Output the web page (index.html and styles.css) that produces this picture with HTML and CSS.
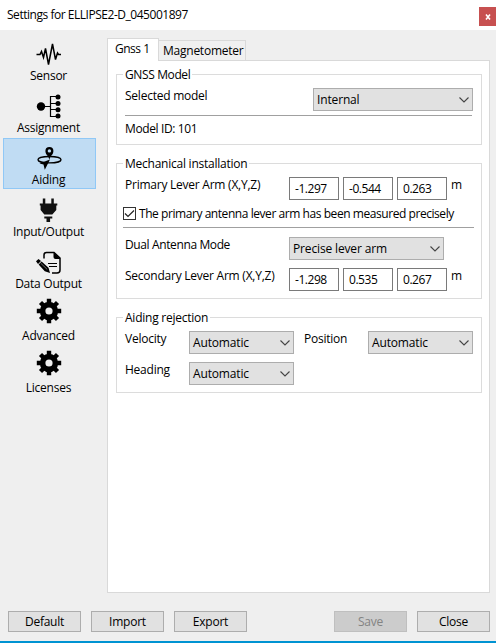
FILE: index.html
```html
<!DOCTYPE html>
<html lang="en">
<head>
<meta charset="utf-8">
<title>Settings for ELLIPSE2-D_045001897</title>
<link rel="stylesheet" href="styles.css">
</head>
<body>
<div class="window">
  <header class="titlebar"><span class="title">Settings for ELLIPSE2-D_045001897</span><span class="close-x"><svg width="6" height="6" viewBox="0 0 6 6"><path d="M1 .5 5 5.5M5 .5 1 5.5" stroke="#fff" stroke-width="1.6"/></svg></span></header>
  <div class="content">
    <nav class="sidebar">
      <div class="item"><svg class="icon" viewBox="0 0 26 26"><path d="M.5 12.500H4L5.500 9.500 7.500 15.500 9.500 6.500 12.500 22.500 16.500 2 19.500 17.500 21.500 11 22.500 12.500H25" fill="none" stroke="#000" stroke-width="1.5"/></svg><span>Sensor</span></div>
      <div class="item"><svg class="icon" viewBox="0 0 26 26"><circle cx="5" cy="12.500" r="4.200"/><path d="M5 12.500H14.500M22 2.500H14.500V22.500H22M14.500 9.500H22M14.500 15.500H22" fill="none" stroke="#000" stroke-width="1.200"/><circle cx="22" cy="3" r="2.500"/><circle cx="22" cy="9.400" r="2.500"/><circle cx="22" cy="15.700" r="2.500"/><circle cx="22" cy="22" r="2.500"/></svg><span>Assignment</span></div>
      <div class="item active"><svg class="icon" viewBox="0 0 26 26"><ellipse cx="13.500" cy="13.700" rx="11.500" ry="3.200" fill="none" stroke="#000" stroke-width="1.400"/><path d="M13.400 13.700C12.700 10 9.400 8.700 9.400 5a4 4 0 0 1 8 0C17.400 8.700 14.100 10 13.400 13.700Z"/><circle cx="13.400" cy="4.900" r="1.700" fill="#c0dcf3"/><path d="M14 13.500 3.500 17.500 7.500 18.500 8.800 23.800Z"/></svg><span>Aiding</span></div>
      <div class="item"><svg class="icon" viewBox="0 0 26 26"><path d="M6 .5H8.500V5.500H14.500V.5H17V5.500H20.500V7.500H19.500V12L15.500 16.500H7.500L3.800 12V7.500H3V5.500H6ZM7.500 18.500H15.500V20.500H13.300V24H9.700V20.500H7.500Z" fill="#111" transform="translate(.8 0)"/></svg><span>Input/Output</span></div>
      <div class="item"><svg class="icon" viewBox="0 0 26 26"><path d="M8 8.500V5q0-2.500 2.500-2.500H18L24 8v12q0 3-3 3h-5" fill="none" stroke="#000" stroke-width="1.500"/><path d="M17.500 2 24.500 9h-5q-2 0-2-2Z"/><path d="M12 13.500h9M13 16.500h8" stroke="#000" stroke-width="1.100"/><path d="M0 11.200 2.500 9 5 11 2 14ZM5.600 11.400 12.500 17.700 14 23 8.800 21.200 2.600 14.500Z"/><path d="m4.700 13.200 6.500 6.200" stroke="#bbb" stroke-width=".6"/></svg><span>Data Output</span></div>
      <div class="item gear"><svg class="icon" viewBox="0 0 26 26"><use href="#cog"/></svg><span>Advanced</span></div>
      <div class="item gear"><svg class="icon" viewBox="0 0 26 26"><use href="#cog"/></svg><span>Licenses</span></div>
    </nav>
    <main class="main">
      <div class="tabs"><span class="tab selected">Gnss 1</span><span class="tab second">Magnetometer</span></div>
      <div class="panel">
        <section class="group model">
          <h2 class="tight">GNSS Model</h2>
          <div class="row top"><span class="label">Selected model</span><span class="select wide">Internal<svg class="chev" viewBox="0 0 10 6"><path d="M.5.5 5 5 9.500.5"/></svg></span></div>
          <div class="rule"></div>
          <div class="model-id tight">Model ID: 101</div>
        </section>
        <section class="group mechanical">
          <h2>Mechanical installation</h2>
          <div class="row"><span class="label arm">Primary Lever Arm (X,Y,Z)</span><span class="fields"><span>-1.297</span><span>-0.544</span><span>0.263</span></span><span class="unit">m</span></div>
          <div class="check-row"><span class="check"><svg width="11" height="11" viewBox="0 0 11 11"><path d="M1 5.500 4 8.500 10 2.500" fill="none" stroke="#222" stroke-width="1.200"/></svg></span><span class="check-label">The primary antenna lever arm has been measured precisely</span></div>
          <div class="rule full"></div>
          <div class="row dual"><span class="label arm tight">Dual Antenna Mode</span><span class="select medium">Precise lever arm<svg class="chev" viewBox="0 0 10 6"><path d="M.5.5 5 5 9.500.5"/></svg></span></div>
          <div class="row second-arm"><span class="label arm">Secondary Lever Arm (X,Y,Z)</span><span class="fields"><span>-1.298</span><span>0.535</span><span>0.267</span></span><span class="unit">m</span></div>
        </section>
        <section class="group rejection">
          <h2>Aiding rejection</h2>
          <div class="reject-grid">
            <span class="label">Velocity</span><span class="select">Automatic<svg class="chev" viewBox="0 0 10 6"><path d="M.5.5 5 5 9.500.5"/></svg></span><span class="label position">Position</span><span class="select">Automatic<svg class="chev" viewBox="0 0 10 6"><path d="M.5.5 5 5 9.500.5"/></svg></span>
            <span class="label">Heading</span><span class="select">Automatic<svg class="chev" viewBox="0 0 10 6"><path d="M.5.5 5 5 9.500.5"/></svg></span>
          </div>
        </section>
      </div>
    </main>
  </div>
  <footer class="footer"><span class="button">Default</span><span class="button">Import</span><span class="button">Export</span><span class="button save">Save</span><span class="button">Close</span></footer>
</div>
<svg width="0" height="0" class="defs"><defs><g id="cog"><g stroke="#000" stroke-width="4.400"><path d="M13 .8V5M13 21v4.200M.8 13H5M21 13h4.200M4.500 4.500 7.500 7.500M18.500 18.500l3 3M4.500 21.500l3-3M18.500 7.500l3-3"/></g><circle cx="13" cy="13" r="6.400" fill="none" stroke="#000" stroke-width="5.600"/></g></defs></svg>
</body>
</html>
```

FILE: styles.css
```css
* { box-sizing: border-box; }
body { margin: 0; background: #efefef; color: #000; font: 12px/16px "Open Sans", "Noto Sans", sans-serif; letter-spacing: -0.24px; overflow: hidden; }
.window { height: 643px; border-bottom: 2px solid #0093d2; display: flex; flex-direction: column; white-space: nowrap; }
.titlebar { height: 30px; background: #fff; display: flex; justify-content: space-between; padding: 7px 0 0 7px; }
.title { letter-spacing: -0.47px; }
.close-x { width: 17px; height: 19px; background: #c75050; display: flex; align-items: center; padding-left: 6px; }
.content { display: flex; height: 563px; }
.sidebar { width: 107px; padding: 4px 0 0 3px; }
.item { width: 93px; height: 51px; margin-bottom: 1px; padding: 7px 2px 0 0; display: flex; flex-direction: column; align-items: center; border: 1px solid transparent; }
.item .icon { width: 26px; height: 26px; flex: none; }
.item.gear { padding-top: 3px; }
.item.gear span { margin-top: 4px; }
.item.active { background: #c0dcf3; border-color: #90c8f6; }
.main { width: 382px; padding-top: 8px; }
.tabs { display: flex; align-items: flex-end; height: 22px; }
.tab { border: 1px solid #d9d9d9; border-bottom: 0; }
.selected { width: 52px; height: 23px; margin-bottom: -1px; background: #fff; z-index: 1; position: relative; padding: 2px 0 0 7px; letter-spacing: -0.5px; }
.second { width: 87px; height: 20px; border-left: 0; padding: 2px 0 0 4px; background: #f0f0f0; }
.panel { height: 533px; width: 383px; margin-right: -1px; background: #fff; border: 1px solid #d9d9d9; padding: 13px 0 0 8px; }
.group { width: 366px; border: 1px solid #dcdcdc; padding-left: 8px; }
.model { height: 71px; margin-bottom: 18px; }
.mechanical { height: 136px; margin-bottom: 18px; }
.rejection { height: 76px; }
h2 { font: inherit; width: max-content; height: 16px; margin: -8px 0 5px -2px; padding: 0 2px; background: #fff; }
.tight { letter-spacing: -0.38px; }
.row { display: flex; height: 23px; }
.label { line-height: 16px; }
.top { justify-content: space-between; padding-right: 8px; }
.select { width: 105px; height: 23px; border: 1px solid #adadad; background: #e1e1e1; padding: 3px 3px 0; display: flex; justify-content: space-between; letter-spacing: -0.15px; }
.wide { width: 160px; }
.medium { width: 155px; }
.chev { width: 10px; height: 6px; margin-top: 5px; fill: none; stroke: #444; stroke-width: 1.1; }
.rule { height: 1px; width: 347px; background: #a0a0a0; margin-top: 4px; }
.model-id { margin-top: 5px; }
.arm { width: 164px; }
.fields { display: flex; gap: 4px; letter-spacing: -0.45px; }
.fields span { width: 50px; height: 23px; border: 1px solid #7a7a7a; padding: 3px 0 0 5px; background: #fff; }
.unit { margin-left: 4px; }
.check-row { display: flex; gap: 3px; margin: 6px 0 0 -2px; height: 16px; }
.check-label { letter-spacing: -0.44px; }
.check { width: 13px; height: 13px; margin-top: 1px; border: 1px solid #333; }
.check svg { display: block; }
.full { width: 351px; margin: 5px 0 0 -2px; }
.dual { margin-top: 9px; }
.second-arm { margin-top: 8px; }
.reject-grid { display: grid; grid-template-columns: 64px 105px 74px 105px; grid-auto-rows: 23px; row-gap: 8px; }
.position { padding-left: 10px; }
.footer { display: flex; gap: 10px; padding: 18px 6px 0 8px; }
.button { width: 73px; height: 21px; border: 1px solid #adadad; background: #e1e1e1; text-align: center; line-height: 19px; }
.save { margin-left: auto; background: #ccc; border-color: #bfbfbf; color: #838383; }
.defs { position: absolute; }
```
